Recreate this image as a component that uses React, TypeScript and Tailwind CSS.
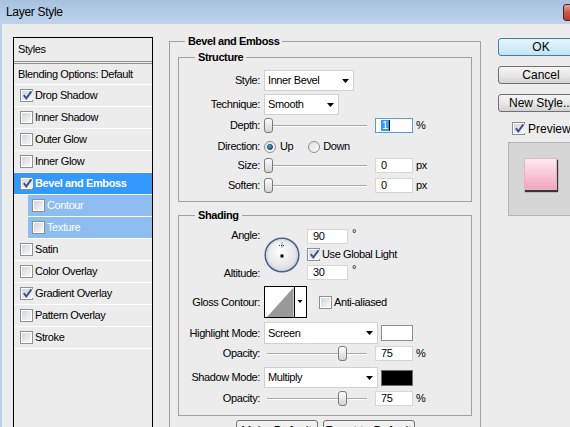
import type { ReactNode } from "react"

// Layer Style dialog (Photoshop, Windows 7 look)

const layerStyles = [
  { name: "Drop Shadow", checked: true },
  { name: "Inner Shadow" },
  { name: "Outer Glow" },
  { name: "Inner Glow" },
  { name: "Bevel and Emboss", checked: true, selected: true },
  { name: "Contour", sub: true },
  { name: "Texture", sub: true },
  { name: "Satin" },
  { name: "Color Overlay" },
  { name: "Gradient Overlay", checked: true },
  { name: "Pattern Overlay" },
  { name: "Stroke" },
]

function Checkbox({ checked }: { checked?: boolean }) {
  return (
    <span className="w-[13px] h-[13px] shrink-0 border border-[#8e8f8f] bg-white p-[1px] flex">
      <span className="flex-1 bg-gradient-to-br from-[#d2d5da] to-[#f8f8f8] flex items-center justify-center">
        {checked && (
          <svg width="11" height="11" viewBox="0 0 11 11">
            <path d="M1.8 5.2 L4.3 8.4 L9.4 1.4" fill="none" stroke="#3a4f96" strokeWidth="1.9" />
          </svg>
        )}
      </span>
    </span>
  )
}

function Radio({ checked }: { checked?: boolean }) {
  return (
    <span className="w-[12px] h-[12px] shrink-0 rounded-full border border-[#8e8f8f] bg-gradient-to-br from-[#e0e0e0] to-[#fbfbfb] flex items-center justify-center">
      {checked && (
        <span className="w-[6px] h-[6px] rounded-full bg-gradient-to-br from-[#6fc3ee] to-[#0f4f8e] border border-[#0e3c6a]" />
      )}
    </span>
  )
}

function Select({ value, className }: { value: string; className: string }) {
  return (
    <div className={`${className} shrink-0 bg-white border border-[#d0d0d0] flex items-center pl-[3px] pr-[4px]`}>
      <span className="flex-1">{value}</span>
      <svg width="7" height="4" viewBox="0 0 7 4">
        <path d="M0 0h7L3.5 4z" fill="#000" />
      </svg>
    </div>
  )
}

function Field({ value, className = "w-[38px]", focus }: { value: string; className?: string; focus?: boolean }) {
  return (
    <div
      className={`${className} h-[15px] shrink-0 bg-white border flex items-center pl-[5px] ${
        focus ? "border-[#5b9bd8]" : "border-[#d6d6d6]"
      }`}
    >
      {focus ? (
        <>
          <span className="bg-[#3399ff] text-white leading-[11px] px-[1px]">{value}</span>
          <span className="w-[1px] h-[11px] bg-black" />
        </>
      ) : (
        value
      )}
    </div>
  )
}

function Slider({ thumb }: { thumb: string }) {
  return (
    <div className="relative ml-[4px] w-[106px] h-[15px] shrink-0">
      <div className="absolute left-[3px] right-[3px] top-[7px] h-[2px] bg-[#a9a9a9] border-b border-white" />
      <div
        className={`absolute top-0 ${thumb} w-[9px] h-[15px] rounded-[3px] border border-[#7b7b7b] bg-gradient-to-b from-[#fdfdfd] to-[#d3d3d3]`}
      />
    </div>
  )
}

function Row({ label, className, children }: { label: string; className: string; children: ReactNode }) {
  return (
    <div className={`flex items-center ${className}`}>
      <span className="w-[81px] shrink-0 text-right">{label}</span>
      {children}
    </div>
  )
}

function Button({ label, className, primary }: { label: string; className: string; primary?: boolean }) {
  return (
    <div
      className={`${className} shrink-0 rounded-[3px] border flex items-center justify-center text-[12px] tracking-normal ${
        primary
          ? "border-[#3c7fb1] bg-gradient-to-b from-[#eaf6fd] to-[#bfe4f8]"
          : "border-[#707070] bg-gradient-to-b from-[#f4f4f4] via-[#e9e9e9] to-[#d2d2d2]"
      }`}
    >
      {label}
    </div>
  )
}

function AngleDial() {
  return (
    <svg width="36" height="36" viewBox="0 0 36 36" className="ml-[4px] mt-[8px] shrink-0">
      <defs>
        <radialGradient id="dial" cx="45%" cy="40%" r="65%">
          <stop offset="0" stopColor="#ffffff" />
          <stop offset="1" stopColor="#d9d9d9" />
        </radialGradient>
      </defs>
      <circle cx="18" cy="18" r="16.8" fill="url(#dial)" stroke="#4c5f8e" strokeWidth="1.5" />
      <circle cx="18" cy="18" r="15.3" fill="none" stroke="#c4cde0" strokeWidth="0.8" />
      <path d="M15 8.5h6M18 5.5v6" stroke="#333" strokeWidth="1" strokeDasharray="1 1" />
      <rect x="16.5" y="17.5" width="3" height="3" fill="#000" />
    </svg>
  )
}

function GlossContour() {
  return (
    <svg width="43" height="32" viewBox="0 0 43 32" className="ml-[4px] shrink-0">
      <rect x="0.5" y="0.5" width="42" height="31" fill="#fff" stroke="#000" />
      <polygon points="3,31 29.5,1.5 29.5,31" fill="#999" />
      <path d="M30.5 0.5v31" stroke="#000" />
      <path d="M33.5 14h5l-2.5 3z" fill="#000" />
    </svg>
  )
}

function TitleBar() {
  return (
    <div className="h-[24px] shrink-0 flex items-center bg-gradient-to-b from-[#a8c1de] to-[#bed4eb] pl-[6px]">
      <span className="text-[12px] tracking-[-0.3px]">Layer Style</span>
      <div className="ml-auto mr-[-36px] self-start mt-[4px] w-[43px] h-[17px] rounded-[3px] border border-[#5b2121] bg-gradient-to-b from-[#e7a196] via-[#c7584b] to-[#b93a2d]" />
    </div>
  )
}

function StyleList() {
  return (
    <div className="ml-[11px] mt-[13px] w-[140px] h-[420px] shrink-0 border border-black">
      <div className="h-[26px] flex items-center pl-[4px] pb-[1px] border-b-[3px] border-double border-[#8f8f8f]">Styles</div>
      <div className="h-[21px] flex items-center pl-[4px] border-b border-white">Blending Options: Default</div>
      {layerStyles.map((s) =>
        s.sub ? (
          <div key={s.name} className="h-[22px] flex">
            <div className="ml-[14px] flex-1 flex items-center bg-[#8cbcf0] text-white border-b border-white">
              <span className="ml-[4px] flex">
                <Checkbox />
              </span>
              <span className="ml-[2px]">{s.name}</span>
            </div>
          </div>
        ) : (
          <div
            key={s.name}
            className={`h-[22px] flex items-center border-b border-white ${
              s.selected ? "bg-[#3399ff] text-white font-bold" : ""
            }`}
          >
            <span className="ml-[6px] flex">
              <Checkbox checked={s.checked} />
            </span>
            <span className="ml-[2px]">{s.name}</span>
          </div>
        )
      )}
    </div>
  )
}

function BevelPanel() {
  return (
    <fieldset className="ml-[16px] mt-[11px] w-[312px] shrink-0 self-start border border-[#a0a0a0] px-[8px]">
      <legend className="ml-[7px] px-[3px] font-bold leading-[13px]">Bevel and Emboss</legend>

      <fieldset className="mt-[3px] border border-[#a0a0a0] pb-[8px]">
        <legend className="ml-[16px] px-[3px] font-bold leading-[13px]">Structure</legend>
        <Row label="Style:" className="mt-[6px] h-[21px]">
          <Select value="Inner Bevel" className="ml-[4px] w-[90px] h-[21px]" />
        </Row>
        <Row label="Technique:" className="mt-[3px] h-[21px]">
          <Select value="Smooth" className="ml-[4px] w-[75px] h-[21px]" />
        </Row>
        <Row label="Depth:" className="mt-[3px] h-[15px]">
          <Slider thumb="left-0" />
          <span className="ml-[5px] flex">
            <Field value="1" focus />
          </span>
          <span className="ml-[3px]">%</span>
        </Row>
        <Row label="Direction:" className="mt-[6px] h-[15px]">
          <span className="ml-[4px] flex">
            <Radio checked />
          </span>
          <span className="ml-[4px]">Up</span>
          <span className="ml-[15px] flex">
            <Radio />
          </span>
          <span className="ml-[3px]">Down</span>
        </Row>
        <Row label="Size:" className="mt-[4px] h-[15px]">
          <Slider thumb="left-0" />
          <span className="ml-[5px] flex">
            <Field value="0" />
          </span>
          <span className="ml-[3px]">px</span>
        </Row>
        <Row label="Soften:" className="mt-[5px] h-[15px]">
          <Slider thumb="left-0" />
          <span className="ml-[5px] flex">
            <Field value="0" />
          </span>
          <span className="ml-[3px]">px</span>
        </Row>
      </fieldset>

      <fieldset className="mt-[7px] border border-[#a0a0a0] pb-[9px]">
        <legend className="ml-[16px] px-[3px] font-bold leading-[13px]">Shading</legend>

        <div className="flex mt-[7px] h-[51px]">
          <div className="w-[81px] shrink-0 flex flex-col justify-between text-right leading-[13px]">
            <span>Angle:</span>
            <span>Altitude:</span>
          </div>
          <AngleDial />
          <div className="ml-[7px] flex flex-col">
            <div className="flex">
              <Field value="90" className="w-[41px]" />
              <span className="ml-[4px] leading-[8px]">°</span>
            </div>
            <div className="mt-[4px] h-[13px] flex items-center">
              <Checkbox checked />
              <span className="ml-[2px]">Use Global Light</span>
            </div>
            <div className="mt-[4px] flex">
              <Field value="30" className="w-[41px]" />
              <span className="ml-[4px] leading-[8px]">°</span>
            </div>
          </div>
        </div>

        <Row label="Gloss Contour:" className="mt-[6px] h-[32px]">
          <GlossContour />
          <span className="ml-[12px] flex">
            <Checkbox />
          </span>
          <span className="ml-[2px]">Anti-aliased</span>
        </Row>
        <Row label="Highlight Mode:" className="mt-[4px] h-[22px]">
          <Select value="Screen" className="ml-[4px] w-[114px] h-[22px]" />
          <span className="ml-[3px] w-[32px] h-[16px] bg-white border border-[#8e8e8e]" />
        </Row>
        <Row label="Opacity:" className="mt-[2px] h-[15px]">
          <Slider thumb="left-[74px]" />
          <span className="ml-[5px] flex">
            <Field value="75" />
          </span>
          <span className="ml-[3px]">%</span>
        </Row>
        <Row label="Shadow Mode:" className="mt-[6px] h-[21px]">
          <Select value="Multiply" className="ml-[4px] w-[114px] h-[21px]" />
          <span className="ml-[3px] w-[32px] h-[16px] bg-black border border-[#6e6e6e]" />
        </Row>
        <Row label="Opacity:" className="mt-[3px] h-[15px]">
          <Slider thumb="left-[74px]" />
          <span className="ml-[5px] flex">
            <Field value="75" />
          </span>
          <span className="ml-[3px]">%</span>
        </Row>
      </fieldset>

      <div className="mt-[4px] flex justify-center gap-[5px] pb-[8px]">
        <Button label="Make Default" className="w-[82px] h-[22px]" />
        <Button label="Reset to Default" className="w-[92px] h-[22px]" />
      </div>
    </fieldset>
  )
}

function ActionColumn() {
  return (
    <div className="ml-[17px] mt-[14px] w-[86px] shrink-0 flex flex-col">
      <Button label="OK" className="w-[86px] h-[18px]" primary />
      <Button label="Cancel" className="mt-[10px] w-[86px] h-[18px]" />
      <Button label="New Style..." className="mt-[10px] w-[86px] h-[18px]" />
      <div className="mt-[10px] h-[13px] flex items-center ml-[14px]">
        <Checkbox checked />
        <span className="ml-[3px] text-[12px] tracking-normal">Preview</span>
      </div>
      <div className="mt-[7px] ml-[10px] w-[70px] h-[74px] bg-[#d6d6d6] border border-[#b4b4b4] pl-[15px] pt-[15px]">
        <div className="w-[33px] h-[32px] bg-gradient-to-b from-[#fde9f0] to-[#f0a6be] border border-[#e3b4c3] shadow-[1px_2px_1px_rgba(0,0,0,0.75)]" />
      </div>
    </div>
  )
}

export default function App() {
  return (
    <div className="w-[570px] h-[427px] overflow-hidden bg-[#ececec] font-['Liberation_Sans',Arial,sans-serif] text-[11px] tracking-[-0.4px] text-black flex flex-col">
      <TitleBar />
      <div className="flex flex-1 min-h-0 border-l-[2px] border-[#bcd1ea]">
        <StyleList />
        <BevelPanel />
        <ActionColumn />
      </div>
    </div>
  )
}
